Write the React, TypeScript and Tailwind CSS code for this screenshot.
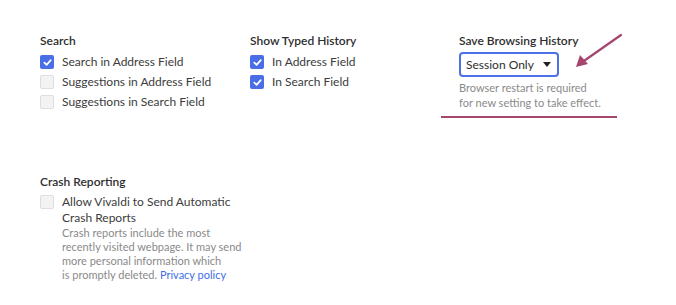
import React from 'react';

const Check: React.FC<{ checked?: boolean }> = ({ checked }) =>
  checked ? (
    <span className="flex h-[14px] w-[14px] shrink-0 items-center justify-center rounded-[2px] bg-[#4a6ee6]">
      <svg width="9" height="9" viewBox="0 0 10 10" fill="none">
        <path d="M1.5 5.2 L4 7.6 L8.6 2.4" stroke="white" strokeWidth="1.9" strokeLinecap="round" strokeLinejoin="round" />
      </svg>
    </span>
  ) : (
    <span className="block h-[14px] w-[14px] shrink-0 rounded-[2px] border border-[#dedede] bg-[#f3f3f3]" />
  );

const Row: React.FC<{ label: string; checked?: boolean }> = ({ label, checked }) => (
  <div className="flex h-5 items-center gap-[8px]">
    <Check checked={checked} />
    <span className="text-[12px] text-[#3c3c3c]">{label}</span>
  </div>
);

const Heading: React.FC<{ children: React.ReactNode }> = ({ children }) => (
  <div className="mb-[3px] h-4 text-[12px] font-semibold leading-4 text-[#2e2e2e]">{children}</div>
);

export default function App() {
  return (
    <div className="h-[305px] w-[676px] bg-white font-['Lato','Open_Sans',sans-serif]">
      <div className="grid grid-cols-[210px_209px_1fr] pl-10 pt-[33px]">
        <div>
          <Heading>Search</Heading>
          <Row label="Search in Address Field" checked />
          <Row label="Suggestions in Address Field" />
          <Row label="Suggestions in Search Field" />
        </div>
        <div>
          <Heading>Show Typed History</Heading>
          <Row label="In Address Field" checked />
          <Row label="In Search Field" checked />
        </div>
        <div className="relative">
          <Heading>Save Browsing History</Heading>
          <div className="mt-[2px] flex h-[25px] w-[100px] items-center justify-between rounded-[4px] border-2 border-[#4d6fe8] pl-[5px] pr-[6px] text-[12px] text-[#2e2e2e]">
            <span>Session Only</span>
            <svg width="8" height="5" viewBox="0 0 8 5">
              <path d="M0 0 H8 L4 5 Z" fill="#222" />
            </svg>
          </div>
          <p className="mt-[3px] text-[11px] leading-[15px] text-[#8a8a8a]">
            Browser restart is required
            <br />
            for new setting to take effect.
          </p>
          <div className="ml-[-18px] mt-[6px] h-[2px] w-[176px] bg-[#a6466f]" />
          <svg className="absolute left-[114px] top-[0px]" width="50" height="40" viewBox="0 0 50 40">
            <path d="M48 2 L8 30" stroke="#a6466f" strokeWidth="2.2" strokeLinecap="round" />
            <path d="M3 34 L7 22 L15 31 Z" fill="#a6466f" />
          </svg>
        </div>
      </div>
      <div className="pl-10 pt-[56px]">
        <Heading>Crash Reporting</Heading>
        <div className="flex gap-[8px]">
          <div className="shrink-0 pt-[2px]">
            <Check />
          </div>
          <div className="pt-[1px]">
            <div className="text-[12px] leading-4 text-[#3c3c3c]">
              Allow Vivaldi to Send Automatic
              <br />
              Crash Reports
            </div>
            <p className="text-[11px] leading-[14px] text-[#8a8a8a]">
              Crash reports include the most
              <br />
              recently visited webpage. It may send
              <br />
              more personal information which
              <br />
              is promptly deleted. <span className="text-[#3e6ee4]">Privacy policy</span>
            </p>
          </div>
        </div>
      </div>
    </div>
  );
}
